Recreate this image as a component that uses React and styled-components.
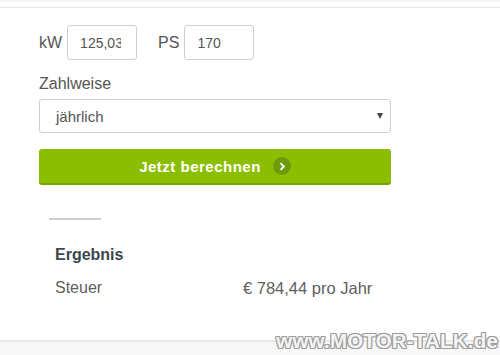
import React from "react";
import styled, { createGlobalStyle } from "styled-components";

const Global = createGlobalStyle`
  html, body { margin: 0; padding: 0; background: #fff; }
  body { font-family: "Liberation Sans", Arial, sans-serif; }
  * { box-sizing: border-box; }
`;

const Page = styled.div`
  position: relative;
  width: 500px;
  height: 355px;
  display: flex;
  flex-direction: column;
  overflow: hidden;
  background: #fff;
`;

const TopBar = styled.div`
  height: 8px;
  border-top: 2px solid #f6f6f6;
  border-bottom: 1px solid #e8e8e8;
  flex: none;
`;

const Form = styled.div`
  padding-left: 39px;
  width: 391px;
  display: flex;
  flex-direction: column;
`;

const PowerRow = styled.div`
  margin-top: 17px;
  display: flex;
  align-items: center;
  height: 35px;
`;

const Label = styled.span`
  font-size: 16px;
  color: #555;
  margin-right: 5px;
  margin-left: ${(p) => p.$gap || 0}px;
`;

const SmallInput = styled.input`
  width: 70px;
  height: 35px;
  border: 1px solid #cfcfcf;
  border-radius: 3px;
  padding: 0 15px 0 12px;
  font-family: "Liberation Sans", Arial, sans-serif;
  font-size: 14px;
  color: #555;
  background: #fff;
  outline: none;
`;

const FieldLabel = styled.div`
  margin-top: 14px;
  font-size: 16px;
  line-height: 20px;
  color: #555;
`;

const SelectBox = styled.div`
  margin-top: 5px;
  height: 34px;
  border: 1px solid #cfcfcf;
  border-radius: 3px;
  display: flex;
  align-items: center;
  justify-content: space-between;
  padding: 0 6px 0 16px;
  font-size: 15px;
  color: #555;
`;

const Caret = styled.span`
  width: 0;
  height: 0;
  border-left: 3.5px solid transparent;
  border-right: 3.5px solid transparent;
  border-top: 6px solid #444;
  margin-right: 1px;
`;

const Button = styled.button`
  margin-top: 16px;
  height: 36px;
  border: none;
  border-bottom: 2px solid #77a200;
  border-radius: 3px;
  background: #8cbe00;
  color: #fff;
  font-family: "Liberation Sans", Arial, sans-serif;
  font-weight: bold;
  font-size: 15px;
  letter-spacing: 0.5px;
  display: flex;
  align-items: center;
  justify-content: center;
  gap: 12px;
  padding: 0;
`;

const ArrowCircle = styled.span`
  width: 18px;
  height: 18px;
  border-radius: 50%;
  background: #6f9a0e;
  display: flex;
  align-items: center;
  justify-content: center;
`;

const Divider = styled.div`
  margin-top: 33px;
  margin-left: 10px;
  width: 52px;
  height: 2px;
  background: #cdcdcd;
`;

const Results = styled.div`
  margin-top: 25px;
  margin-left: 55px;
  display: grid;
  grid-template-columns: 188px 1fr;
  row-gap: 13px;
  font-size: 16px;
  line-height: 20px;
`;

const ResultTitle = styled.div`
  grid-column: 1 / -1;
  font-weight: bold;
  color: #3c474b;
`;

const Cell = styled.div`
  color: #606060;
  white-space: nowrap;
  font-size: ${(p) => p.$size || 16}px;
`;

const Footer = styled.div`
  margin-top: auto;
  height: 15px;
  border-top: 2px solid #e9e9e9;
  background: #f8f8f8;
  flex: none;
`;

const Watermark = styled.div`
  position: absolute;
  right: 2px;
  bottom: 2px;
  font-family: "Liberation Sans", Arial, sans-serif;
  font-weight: bold;
  font-size: 20.5px;
  letter-spacing: 0.2px;
  color: #f4f4f4;
  text-shadow:
    1px 0 0 #9d9d9d, -1px 0 0 #9d9d9d, 0 1px 0 #9d9d9d, 0 -1px 0 #9d9d9d,
    1px 1px 0 #9d9d9d, -1px -1px 0 #9d9d9d, 1px -1px 0 #9d9d9d, -1px 1px 0 #9d9d9d;
`;

export default function App() {
  return (
    <>
      <Global />
      <Page>
        <TopBar />
        <Form>
          <PowerRow>
            <Label>kW</Label>
            <SmallInput defaultValue="125,03" />
            <Label $gap={21}>PS</Label>
            <SmallInput defaultValue="170" />
          </PowerRow>
          <FieldLabel>Zahlweise</FieldLabel>
          <SelectBox>
            <span>jährlich</span>
            <Caret />
          </SelectBox>
          <Button>
            Jetzt berechnen
            <ArrowCircle>
              <svg width="8" height="9" viewBox="0 0 8 9">
                <path d="M2.5 1.2 L5.8 4.5 L2.5 7.8" fill="none" stroke="#fff" strokeWidth="1.9" />
              </svg>
            </ArrowCircle>
          </Button>
          <Divider />
        </Form>
        <Results>
          <ResultTitle>Ergebnis</ResultTitle>
          <Cell>Steuer</Cell>
          <Cell $size={16.5}>€ 784,44 pro Jahr</Cell>
        </Results>
        <Footer />
        <Watermark>www.MOTOR-TALK.de</Watermark>
      </Page>
    </>
  );
}
